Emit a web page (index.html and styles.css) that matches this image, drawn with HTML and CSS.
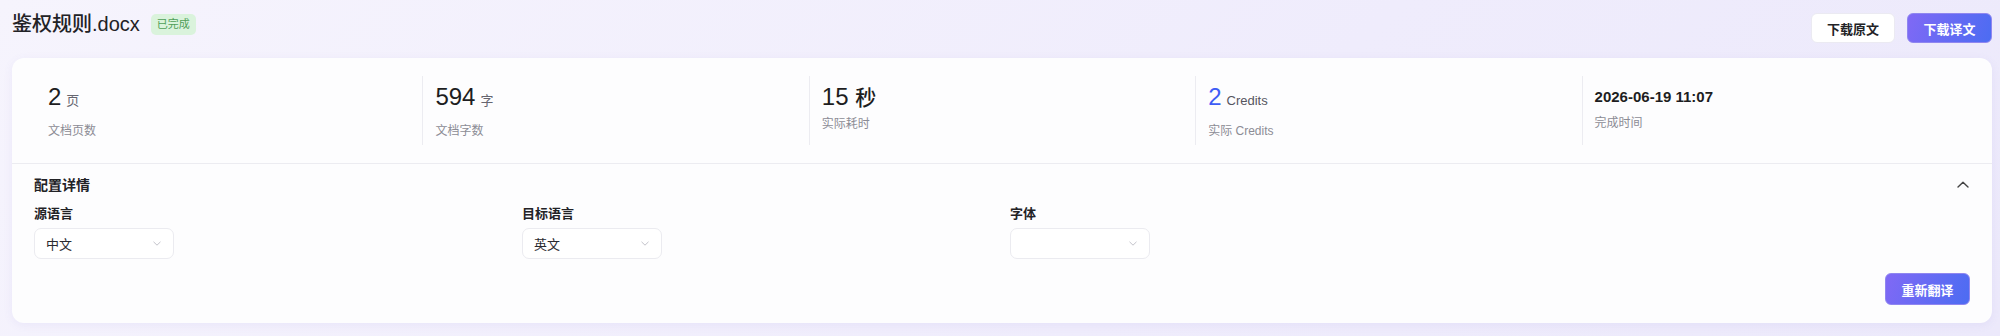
FILE: index.html
```html
<!DOCTYPE html>
<html lang="zh-CN">
<head>
    <meta charset="UTF-8">
    <meta name="viewport" content="width=device-width, initial-scale=1.0">
    <title>鉴权规则.docx</title>
    <link rel="stylesheet" href="styles.css">
</head>
<body>
    <div class="page">
        <header class="topbar">
            <div class="title-group">
                <h1 class="doc-title">鉴权规则.docx</h1>
                <span class="badge">已完成</span>
            </div>
            <div class="actions">
                <button class="btn btn-light">下载原文</button>
                <button class="btn btn-primary">下载译文</button>
            </div>
        </header>

        <section class="card">
            <div class="stats">
                <div class="stat">
                    <div class="stat-value">2<span class="unit">页</span></div>
                    <div class="stat-label">文档页数</div>
                </div>
                <div class="stat">
                    <div class="stat-value">594<span class="unit">字</span></div>
                    <div class="stat-label">文档字数</div>
                </div>
                <div class="stat plain">
                    <div class="stat-value">15 <span class="unit-big">秒</span></div>
                    <div class="stat-label">实际耗时</div>
                </div>
                <div class="stat">
                    <div class="stat-value"><span class="blue">2</span><span class="unit credits">Credits</span></div>
                    <div class="stat-label">实际 Credits</div>
                </div>
                <div class="stat plain">
                    <div class="stat-value date">2026-06-19 11:07</div>
                    <div class="stat-label">完成时间</div>
                </div>
            </div>

            <div class="config">
                <div class="config-head">
                    <span>配置详情</span>
                    <svg width="12" height="7" viewBox="0 0 12 7"><path d="M1 6L6 1.2L11 6" fill="none" stroke="#444" stroke-width="1.4" stroke-linecap="round" stroke-linejoin="round"/></svg>
                </div>
                <div class="fields">
                    <div class="field">
                        <label>源语言</label>
                        <div class="select"><span>中文</span><svg width="8" height="5" viewBox="0 0 8 5"><path d="M0.5 0.8L4 4.2L7.5 0.8" fill="none" stroke="#c2c2ca" stroke-width="1"/></svg></div>
                    </div>
                    <div class="field">
                        <label>目标语言</label>
                        <div class="select"><span>英文</span><svg width="8" height="5" viewBox="0 0 8 5"><path d="M0.5 0.8L4 4.2L7.5 0.8" fill="none" stroke="#c2c2ca" stroke-width="1"/></svg></div>
                    </div>
                    <div class="field">
                        <label>字体</label>
                        <div class="select"><span></span><svg width="8" height="5" viewBox="0 0 8 5"><path d="M0.5 0.8L4 4.2L7.5 0.8" fill="none" stroke="#c2c2ca" stroke-width="1"/></svg></div>
                    </div>
                </div>
                <div class="config-foot">
                    <button class="btn btn-primary btn-tall">重新翻译</button>
                </div>
            </div>
        </section>
    </div>
</body>
</html>
```

FILE: styles.css
```css
body {
    margin: 0;
    font-family: "Liberation Sans", "Noto Sans CJK SC", sans-serif;
    background: linear-gradient(135deg, #f6f4fd, #efecfc 60%, #ece9fb);
    color: #1f1f24;
    height: 336px;
    overflow: hidden;
}
.page {
    padding: 13px 8px 0 12px;
}
.topbar {
    display: flex;
    justify-content: space-between;
    align-items: flex-start;
    margin-bottom: 15px;
}
.title-group {
    display: flex;
    align-items: flex-start;
    gap: 11px;
}
.doc-title {
    margin: 0;
    font-size: 20px;
    line-height: 22px;
    font-weight: 500;
    color: #222226;
}
.badge {
    margin-top: 1px;
    height: 21px;
    line-height: 21px;
    padding: 0 6px;
    font-size: 11px;
    color: #4f9f58;
    background: #daf3dc;
    border-radius: 5px;
}
.actions {
    display: flex;
    gap: 12px;
}
.btn {
    height: 30px;
    padding: 0;
    white-space: nowrap;
    font-family: inherit;
    font-size: 13px;
    font-weight: 600;
    border-radius: 6px;
    border: 1px solid transparent;
    cursor: pointer;
}
.btn-light {
    width: 84px;
    background: #ffffff;
    border-color: #ebeaf2;
    color: #222226;
}
.btn-primary {
    width: 85px;
    background: linear-gradient(110deg, #8069f5, #4c6cf2);
    border-color: #8f86f0;
    color: #ffffff;
}
.btn-tall {
    height: 32px;
}
.card {
    background: #fdfdfe;
    border-radius: 12px;
    box-shadow: 0 2px 10px rgba(110, 100, 200, 0.08);
}
.stats {
    display: grid;
    grid-template-columns: repeat(5, 1fr);
    padding: 18px 24px;
    border-bottom: 1px solid #ececf1;
}
.stat {
    height: 69px;
    padding-left: 12px;
}
.stat + .stat {
    border-left: 1px solid #ececf1;
}
.stat-value {
    margin-top: 5px;
    font-size: 24px;
    line-height: 32px;
    font-weight: 500;
    color: #1d1d21;
}
.unit {
    margin-left: 5px;
    font-size: 13px;
    font-weight: 400;
    color: #666670;
}
.unit.credits {
    color: #55555e;
}
.unit-big {
    font-size: 21px;
}
.blue {
    color: #3e5cf5;
}
.stat-value.date {
    font-size: 15px;
    font-weight: 600;
}
.stat-label {
    margin-top: 5px;
    font-size: 12px;
    line-height: 18px;
    color: #8c8c95;
}
.stat.plain .stat-label {
    margin-top: 1px;
}
.config {
    padding: 11px 22px 18px;
}
.config-head {
    display: flex;
    justify-content: space-between;
    align-items: center;
    height: 18px;
    font-size: 14px;
    font-weight: 600;
    color: #222226;
}
.config-head svg {
    margin-right: 1px;
}
.fields {
    display: grid;
    grid-template-columns: repeat(4, 1fr);
    gap: 16px;
    margin-top: 12px;
}
.field label {
    display: block;
    font-size: 13px;
    line-height: 18px;
    font-weight: 600;
    color: #222226;
    margin-bottom: 5px;
}
.select {
    box-sizing: border-box;
    width: 140px;
    height: 31px;
    display: flex;
    justify-content: space-between;
    align-items: center;
    padding: 0 12px 0 11px;
    font-size: 13px;
    color: #2a2a30;
    background: #ffffff;
    border: 1px solid #ebebf0;
    border-radius: 7px;
}
.config-foot {
    display: flex;
    justify-content: flex-end;
    margin-top: 14px;
}
```
